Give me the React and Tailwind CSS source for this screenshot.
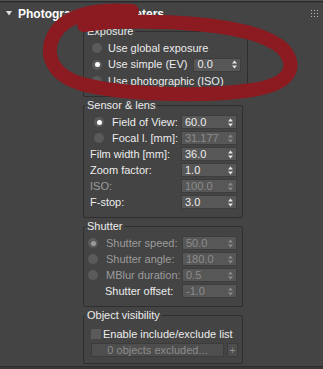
import React from 'react';

const font = { fontFamily: '"Liberation Sans", Arial, sans-serif' };

// radio button in 3ds Max dark style
const Radio = ({ on, disabled }) => (
  <span className="w-[10px] h-[10px] rounded-full bg-[#5a5a5a] flex items-center justify-center shrink-0">
    {on && <span className={`w-[5px] h-[5px] rounded-full ${disabled ? 'bg-[#9a9a9a]' : 'bg-white'}`} />}
  </span>
);

const Arrows = ({ disabled }) => (
  <svg width="5" height="9" viewBox="0 0 5 9" className="shrink-0">
    <g fill={disabled ? '#8a8a8a' : '#e6e6e6'}>
      <polygon points="0,3.5 2.5,0.5 5,3.5" />
      <polygon points="0,5.5 5,5.5 2.5,8.5" />
    </g>
  </svg>
);

const Spinner = ({ value, disabled, w = 'w-[56px]' }) => (
  <div className={`${w} h-[14px] bg-[#575757] border border-[#3d3d3d] flex items-center justify-between pl-[3px] pr-[3px] shrink-0`}>
    <span className={`leading-none ${disabled ? 'text-[#8c8c8c]' : 'text-[#ececec]'}`}>{value}</span>
    <Arrows disabled={disabled} />
  </div>
);

const Group = ({ title, children, className = '' }) => (
  <fieldset className={`border border-[#2f2f2f] rounded-[2px] w-[160px] whitespace-nowrap ${className}`}>
    <legend className="ml-[1px] px-[2px] h-[14px] leading-[14px] text-[#ececec]">{title}</legend>
    {children}
  </fieldset>
);

const GripDots = () => (
  <svg width="7" height="7" viewBox="0 0 7 7">
    <g fill="#bdbdbd">
      {[0, 3, 6].map(y => [0, 3, 6].map(x => <rect key={`${x}-${y}`} x={x} y={y} width="1" height="1" />))}
    </g>
  </svg>
);

export default function App() {
  return (
    <div className="relative w-[323px] h-[369px] bg-[#444444] overflow-hidden text-[11px] flex flex-col" style={font}>
      {/* top edge */}
      <div className="h-[1px] bg-[#505050]" />
      <div className="h-[1px] bg-[#2a2a2a]" />
      <div className="h-[1px] bg-[#3a3a3a]" />

      {/* rollout header */}
      <div className="h-[21px] flex items-center pl-[6px] pr-[4px]">
        <svg width="6" height="5" viewBox="0 0 6 5" className="mr-[6px]">
          <polygon points="0,0 6,0 3,4.5" fill="#e0e0e0" />
        </svg>
        <span className="font-bold text-white text-[12px] leading-none">Photographic Parameters</span>
        <div className="ml-auto mr-[1px]"><GripDots /></div>
      </div>

      <div className="flex flex-col pl-[83px]">
        <Group title="Exposure" className="pb-[7px]">
          <div className="flex flex-col pt-[2px] pl-[8px]">
            <div className="h-[16px] flex items-center gap-[6px]">
              <Radio />
              <span className="text-[#ececec]">Use global exposure</span>
            </div>
            <div className="h-[17px] flex items-center gap-[6px]">
              <Radio on />
              <span className="text-[#ececec]">Use simple (EV)</span>
              <div className="ml-auto mr-[6px]"><Spinner value="0.0" w="w-[48px]" /></div>
            </div>
            <div className="h-[16px] flex items-center gap-[6px]">
              <Radio />
              <span className="text-[#ececec]">Use photographic (ISO)</span>
            </div>
          </div>
        </Group>

        <Group title="Sensor & lens" className="pb-[7px] mt-[1px]">
          <div className="flex flex-col pt-[2px] pl-[6px] pr-[5px]">
            <div className="h-[16px] flex items-center">
              <span className="w-[22px] pl-[4px]"><Radio on /></span>
              <span className="text-[#ececec]">Field of View:</span>
              <div className="ml-auto"><Spinner value="60.0" /></div>
            </div>
            <div className="h-[16px] flex items-center">
              <span className="w-[22px] pl-[4px]"><Radio /></span>
              <span className="text-[#ececec]">Focal l. [mm]:</span>
              <div className="ml-auto"><Spinner value="31.177" disabled /></div>
            </div>
            <div className="h-[16px] flex items-center">
              <span className="text-[#ececec]">Film width [mm]:</span>
              <div className="ml-auto"><Spinner value="36.0" /></div>
            </div>
            <div className="h-[16px] flex items-center">
              <span className="text-[#ececec]">Zoom factor:</span>
              <div className="ml-auto"><Spinner value="1.0" /></div>
            </div>
            <div className="h-[16px] flex items-center">
              <span className="text-[#9c9c9c]">ISO:</span>
              <div className="ml-auto"><Spinner value="100.0" disabled /></div>
            </div>
            <div className="h-[16px] flex items-center">
              <span className="text-[#ececec]">F-stop:</span>
              <div className="ml-auto"><Spinner value="3.0" /></div>
            </div>
          </div>
        </Group>

        <Group title="Shutter" className="pb-[7px] mt-[1px]">
          <div className="flex flex-col pt-[2px] pl-[4px] pr-[5px]">
            <div className="h-[16px] flex items-center">
              <span className="w-[18px]"><Radio on disabled /></span>
              <span className="text-[#9c9c9c]">Shutter speed:</span>
              <div className="ml-auto"><Spinner value="50.0" disabled w="w-[55px]" /></div>
            </div>
            <div className="h-[16px] flex items-center">
              <span className="w-[18px]"><Radio /></span>
              <span className="text-[#9c9c9c]">Shutter angle:</span>
              <div className="ml-auto"><Spinner value="180.0" disabled w="w-[55px]" /></div>
            </div>
            <div className="h-[16px] flex items-center">
              <span className="w-[18px]"><Radio /></span>
              <span className="text-[#9c9c9c]">MBlur duration:</span>
              <div className="ml-auto"><Spinner value="0.5" disabled w="w-[55px]" /></div>
            </div>
            <div className="h-[16px] flex items-center">
              <span className="w-[17px]" />
              <span className="text-[#ececec]">Shutter offset:</span>
              <div className="ml-auto"><Spinner value="-1.0" disabled w="w-[55px]" /></div>
            </div>
          </div>
        </Group>

        <Group title="Object visibility" className="pb-[6px] mt-[1px]">
          <div className="flex flex-col pt-[4px] pl-[7px] pr-[4px]">
            <div className="h-[16px] flex items-center gap-[2px]">
              <span className="w-[10px] h-[10px] bg-[#5a5a5a] shrink-0" />
              <span className="text-[#ececec]">Enable include/exclude list</span>
            </div>
            <div className="h-[14px] flex items-center gap-[3px] mt-[1px]">
              <div className="w-[133px] h-[14px] bg-[#4e4e4e] border border-[#3c3c3c] flex items-center justify-center text-[#8c8c8c] leading-none">
                0 objects excluded...
              </div>
              <div className="w-[11px] h-[14px] bg-[#4e4e4e] border border-[#3c3c3c] flex items-center justify-center text-[#8c8c8c] leading-none">
                +
              </div>
            </div>
          </div>
        </Group>
      </div>

      <div className="mt-auto h-[3px] bg-[#383838] border-t border-[#2c2c2c]" />

      {/* red marker annotation drawn over the panel */}
      <svg className="absolute inset-0 pointer-events-none" width="323" height="369" viewBox="0 0 323 369">
        <path
          d="M 132 11 C 102 9, 74 12, 59 28 C 42 48, 48 74, 82 84 C 122 95, 205 97, 252 90 C 292 84, 298 66, 283 49 C 267 34, 228 26, 182 23 C 150 21, 115 20, 84 25"
          fill="none"
          stroke="#8b1b20"
          strokeWidth="14"
          strokeLinecap="round"
          strokeLinejoin="round"
        />
      </svg>
    </div>
  );
}
